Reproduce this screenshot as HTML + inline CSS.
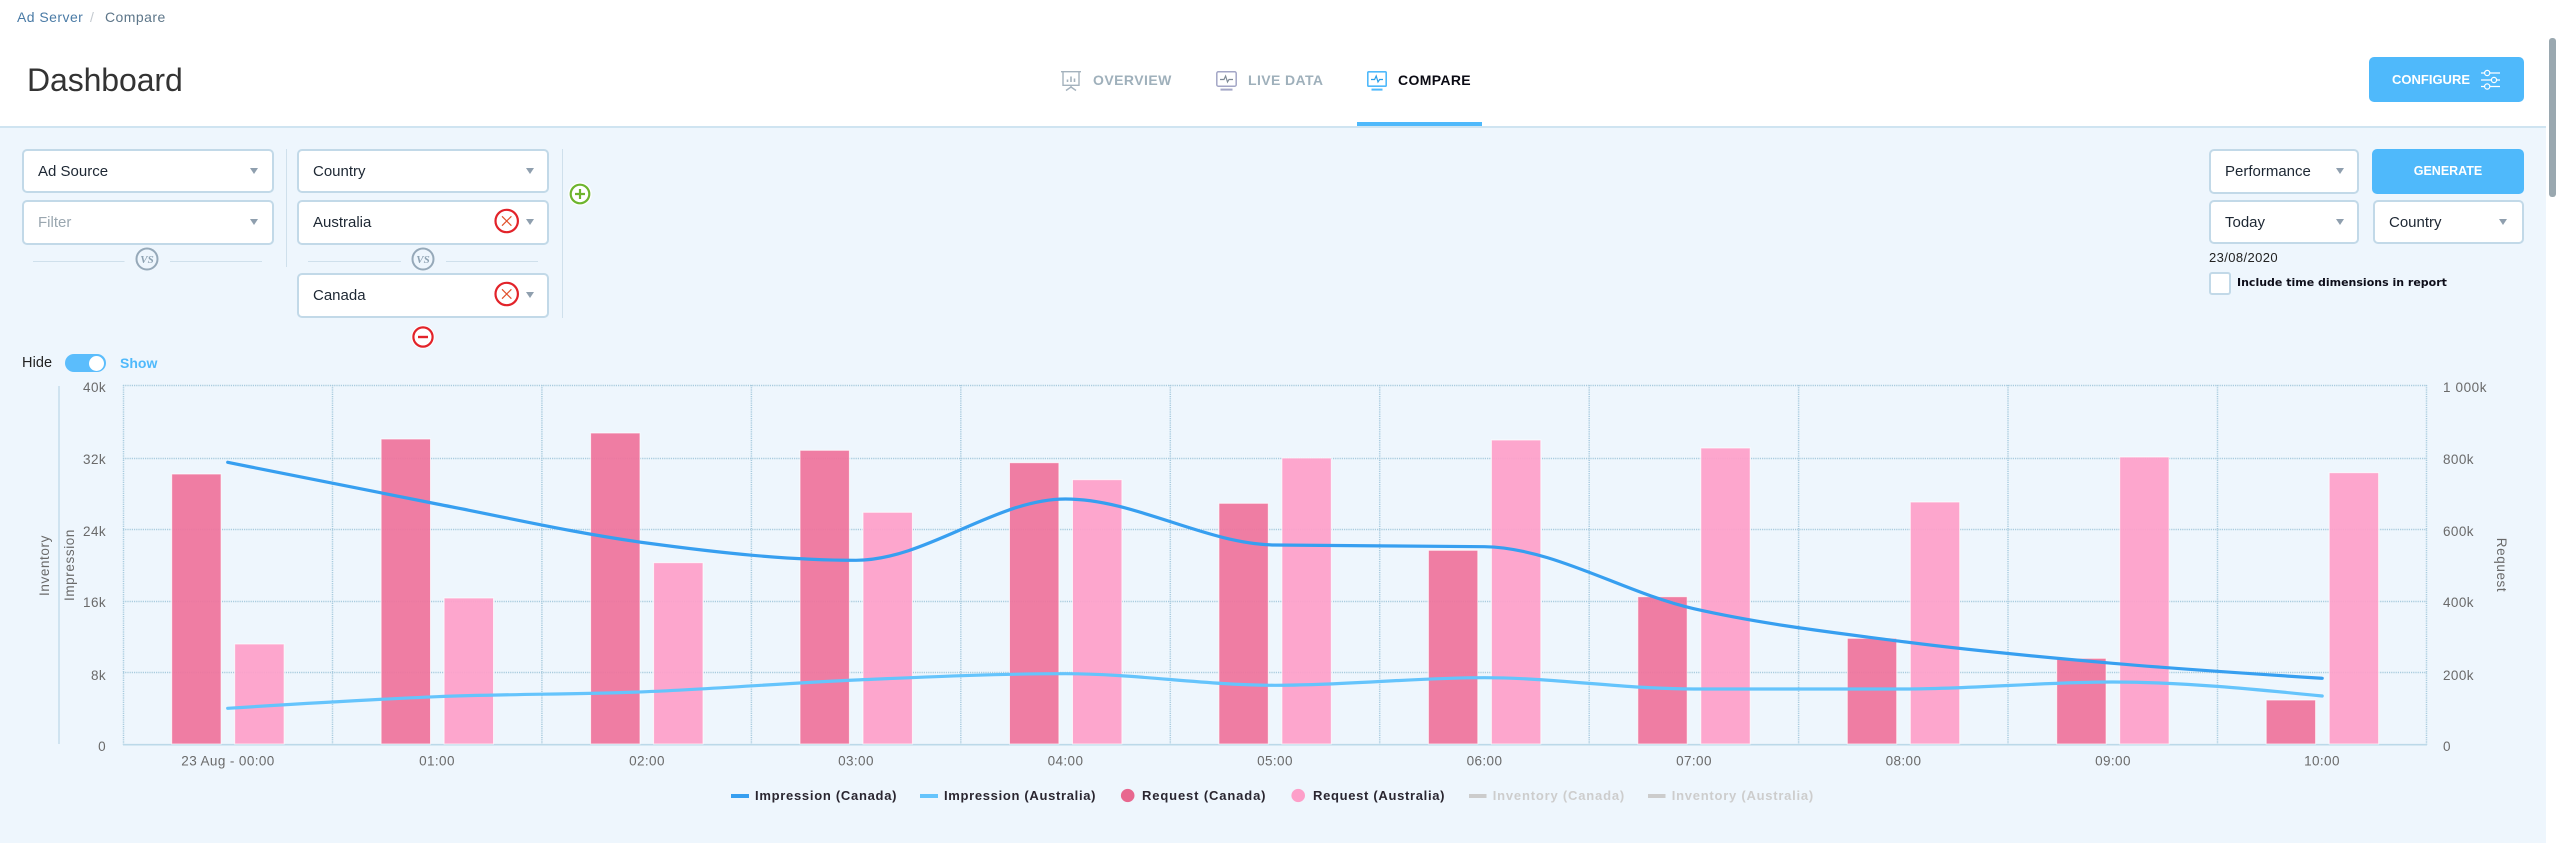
<!DOCTYPE html>
<html lang="en">
<head>
<meta charset="utf-8">
<title>Dashboard</title>
<style>
html,body{margin:0;padding:0;width:2556px;height:843px;overflow:hidden;background:#fff;font-family:"Liberation Sans",sans-serif}
.a{position:absolute;white-space:nowrap}
#panel{position:absolute;left:0;top:126px;width:2546px;height:717px;background:#eef6fd;border-top:2px solid #cfe4f1;box-sizing:border-box}
.sel{position:absolute;box-sizing:border-box;background:#fff;border:2px solid #c2d9e8;border-radius:5px;height:45px;font-size:15px;line-height:41px;color:#1d2733;padding-left:14px;white-space:nowrap}
.sel i{position:absolute;top:17px;width:0;height:0;border-left:4.5px solid transparent;border-right:4.5px solid transparent;border-top:6px solid #8f9fae}
.btn{position:absolute;background:#4fb9fb;color:#fff;font-weight:bold;border-radius:5px;box-sizing:border-box;white-space:nowrap}
svg{position:absolute;overflow:visible}
</style>
</head>
<body>
<div class="a" style="left:17px;top:9px;font-size:14px;line-height:17px;letter-spacing:.45px;color:#4a7ba6">Ad Server</div>
<div class="a" style="left:90px;top:9px;font-size:14px;line-height:17px;color:#c3c9cf">/</div>
<div class="a" style="left:105px;top:9px;font-size:14px;line-height:17px;letter-spacing:.45px;color:#5d7689">Compare</div>
<div class="a" style="left:27px;top:60px;font-size:32px;line-height:40px;color:#333;letter-spacing:-.1px">Dashboard</div>

<svg style="left:1061px;top:71px" width="20" height="20" viewBox="0 0 20 20" fill="none" stroke="#a4b2bd" stroke-width="1.4">
<path d="M0 .7H20M2 1V14.3H18V1M10 14.5V16M5 19.5L10 16L15 19.5"/>
<path d="M6.5 11V8.5M10 11V5.5M13.5 11V7.5" stroke-width="1.6"/>
</svg>
<div class="a" style="left:1093px;top:72px;font-size:14px;line-height:17px;font-weight:bold;letter-spacing:.45px;color:#9fb0bb">OVERVIEW</div>
<svg style="left:1216px;top:71px" width="21" height="20" viewBox="0 0 21 20" fill="none" stroke="#a3a6c6" stroke-width="1.5">
<rect x=".8" y=".8" width="19.4" height="14.4" rx="1.5"/>
<path d="M4 8.5H8L9.6 5L11.5 11L13 8.5H17" stroke="#7f8a96" stroke-width="1.2"/>
<path d="M4.5 18.6H16.5" stroke-width="2"/>
</svg>
<div class="a" style="left:1248px;top:72px;font-size:14px;line-height:17px;font-weight:bold;letter-spacing:.4px;color:#9fb0bb">LIVE DATA</div>
<svg style="left:1367px;top:71px" width="20" height="20" viewBox="0 0 20 20" fill="none" stroke="#4fb9fb" stroke-width="1.6">
<rect x=".8" y=".8" width="18.4" height="14.4" rx="1"/>
<path d="M4 8.5H7.6L9.2 5L11 11L12.6 8.5H16" stroke="#2b9fe8" stroke-width="1.2"/>
<path d="M4.5 18.6H15.5" stroke-width="2"/>
</svg>
<div class="a" style="left:1398px;top:72px;font-size:14px;line-height:17px;font-weight:bold;letter-spacing:.35px;color:#0b0b14">COMPARE</div>
<div class="a" style="left:1357px;top:122px;width:125px;height:4px;background:#4fb9fb"></div>

<div class="btn" style="left:2369px;top:57px;width:155px;height:45px;font-size:13px;line-height:45px;padding-left:23px">CONFIGURE</div>
<svg style="left:2481px;top:70px" width="19" height="20" viewBox="0 0 19 20" fill="none" stroke="#fff" stroke-width="1.2">
<path d="M0 3H3.5M9 3H19M0 10H10M16 10H19M0 16.5H3.5M9 16.5H19"/>
<circle cx="6.2" cy="3" r="2.6"/><circle cx="13" cy="10" r="2.6"/><circle cx="6.2" cy="16.5" r="2.6"/>
</svg>

<div id="panel"></div>
<div class="a" style="left:2549px;top:38px;width:7px;height:159px;background:#9aa8b0;border-radius:3px 3px 3px 3px"></div>

<!-- left filters -->
<div class="sel" style="left:22px;top:149px;width:252px;height:44px">Ad Source<i style="left:225.5px"></i></div>
<div class="sel" style="left:22px;top:200px;width:252px;color:#9aa7b0">Filter<i style="left:225.5px"></i></div>
<div class="a" style="left:286px;top:149px;width:1px;height:118px;background:#cfe0ec"></div>
<div class="sel" style="left:297px;top:149px;width:252px;height:44px">Country<i style="left:226.5px"></i></div>
<div class="sel" style="left:297px;top:200px;width:252px">Australia<i style="left:226.5px"></i></div>
<div class="sel" style="left:297px;top:273px;width:252px">Canada<i style="left:226.5px"></i></div>
<div class="a" style="left:562px;top:149px;width:1px;height:169px;background:#cfe0ec"></div>

<svg style="left:0;top:0" width="600" height="360" viewBox="0 0 600 360" fill="none">
<g stroke="#cfe0ec" stroke-width="1"><path d="M33 261.5H124.5M170 261.5H262M308 261.5H401M446 261.5H538"/></g>
<g stroke="#96a9b9" stroke-width="2" fill="#eef6fd">
<circle cx="147" cy="259" r="10.5"/><circle cx="423" cy="259" r="10.5"/>
</g>
<g font-family="Liberation Serif,serif" font-size="11" font-style="italic" font-weight="bold" fill="#8fa3b3" text-anchor="middle">
<text x="147" y="263">VS</text><text x="423" y="263">VS</text>
</g>
<g fill="#fff" stroke="#e2232a" stroke-width="2.2">
<circle cx="506.7" cy="221" r="11.2"/><circle cx="506.7" cy="294" r="11.2"/>
</g>
<g stroke="#e0502a" stroke-width="1.2">
<path d="M502 216.3L511.4 225.7M511.4 216.3L502 225.7"/>
<path d="M502 289.3L511.4 298.7M511.4 289.3L502 298.7"/>
</g>
<circle cx="580" cy="194" r="11.7" fill="#fff"/>
<circle cx="580" cy="194" r="9.3" fill="#fff" stroke="#6db52e" stroke-width="2.2"/>
<path d="M575 194H585M580 189V199" stroke="#6db52e" stroke-width="2.2"/>
<circle cx="423" cy="337" r="11.7" fill="#fff"/>
<circle cx="423" cy="337" r="9.6" fill="#fff" stroke="#e2232a" stroke-width="2.2"/>
<path d="M418 337H428" stroke="#e2232a" stroke-width="2.4"/>
</svg>

<!-- right filters -->
<div class="sel" style="left:2209px;top:149px;width:150px">Performance<i style="left:124.5px"></i></div>
<div class="btn" style="left:2372px;top:149px;width:152px;height:45px;font-size:12.5px;line-height:45px;text-align:center">GENERATE</div>
<div class="sel" style="left:2209px;top:200px;width:150px;height:44px">Today<i style="left:124.5px"></i></div>
<div class="sel" style="left:2373px;top:200px;width:151px;height:44px">Country<i style="left:123.5px"></i></div>
<div class="a" style="left:2209px;top:250px;font-size:13px;line-height:16px;letter-spacing:.4px;color:#222">23/08/2020</div>
<div class="a" style="left:2209px;top:272px;width:22px;height:23px;box-sizing:border-box;background:#fff;border:2px solid #c2d9e8;border-radius:3px"></div>
<div class="a" style="left:2237px;top:275px;font-family:'DejaVu Sans',sans-serif;font-weight:bold;font-size:11px;line-height:16px;color:#0e0e1a">Include time dimensions in report</div>

<!-- toggle -->
<div class="a" style="left:22px;top:355px;font-size:14.5px;line-height:17px;letter-spacing:.1px;color:#222">Hide</div>
<div class="a" style="left:65px;top:354px;width:41px;height:18px;background:#5bbdfc;border-radius:9px"></div>
<div class="a" style="left:89px;top:355.5px;width:15px;height:15px;background:#fff;border-radius:50%"></div>
<div class="a" style="left:120px;top:355px;font-size:14px;line-height:17px;font-weight:bold;color:#4fb9fb">Show</div>

<!-- chart -->
<svg style="left:0;top:0" width="2556" height="843" viewBox="0 0 2556 843" fill="none">
<path d="M59 386V744" stroke="#cfe3f0" stroke-width="2"/>
<g stroke="#a9cbde" stroke-width="1.5" stroke-dasharray="1.2 1">
<path d="M123 385.5H2427M123 458.5H2427M123 529.5H2427M123 601.5H2427M123 672.5H2427"/>
<path d="M123.5 385V745M332.5 385V745M541.9 385V745M751.4 385V745M960.8 385V745M1170.3 385V745M1379.7 385V745M1589.2 385V745M1798.6 385V745M2008 385V745M2217.5 385V745M2426.5 385V745"/>
</g>
<path d="M123 744.7H2427" stroke="#bcd9e9" stroke-width="1.6"/>

<g fill="#ef739c" fill-opacity=".93" stroke="#fff" stroke-opacity=".7" stroke-width="1">
<rect x="171.7" y="474" width="49.4" height="270"/>
<rect x="381.1" y="439" width="49.4" height="305"/>
<rect x="590.6" y="433" width="49.4" height="311"/>
<rect x="800" y="450.3" width="49.4" height="293.7"/>
<rect x="1009.5" y="462.7" width="49.4" height="281.3"/>
<rect x="1218.9" y="503.3" width="49.4" height="240.7"/>
<rect x="1428.4" y="550.3" width="49.4" height="193.7"/>
<rect x="1637.8" y="596.7" width="49.4" height="147.3"/>
<rect x="1847.3" y="638.3" width="49.4" height="105.7"/>
<rect x="2056.7" y="658.3" width="49.4" height="85.7"/>
<rect x="2266.2" y="700" width="49.4" height="44"/>
</g>
<g fill="#fe9fc9" fill-opacity=".93" stroke="#fff" stroke-opacity=".7" stroke-width="1">
<rect x="234.7" y="644" width="49.4" height="100"/>
<rect x="444.1" y="598" width="49.4" height="146"/>
<rect x="653.6" y="562.7" width="49.4" height="181.3"/>
<rect x="863" y="512.3" width="49.4" height="231.7"/>
<rect x="1072.5" y="479.7" width="49.4" height="264.3"/>
<rect x="1281.9" y="458" width="49.4" height="286"/>
<rect x="1491.4" y="440" width="49.4" height="304"/>
<rect x="1700.8" y="448" width="49.4" height="296"/>
<rect x="1910.3" y="502" width="49.4" height="242"/>
<rect x="2119.7" y="457" width="49.4" height="287"/>
<rect x="2329.2" y="472.7" width="49.4" height="271.3"/>
</g>

<path stroke="#379ff0" stroke-width="3.2" stroke-linecap="round" d="M227.7 462.3C297.5 476.4 367.3 490.6 437.1 504C506.9 517.45 576.8 533.6 646.6 543C716.4 552.4 786.2 560.3 856 560.3C925.8 560.3 995.7 499 1065.5 499C1135.3 499 1205.1 543.9 1274.9 545C1344.7 546.1 1414.6 545.6 1484.4 546.7C1554.2 547.8 1624 592.9 1693.8 608.7C1763.6 624.5 1833.5 632.6 1903.3 641.7C1973.1 650.8 2042.9 657.2 2112.7 663.3C2182.5 669.4 2252.4 673.85 2322.2 678.3"/>
<path stroke="#65c4fc" stroke-width="3.2" stroke-linecap="round" d="M227.7 708.3C297.5 703.9 367.3 699.5 437.1 696.7C506.9 693.9 576.8 694.5 646.6 691.7C716.4 688.9 786.2 683 856 680C925.8 677 995.7 673.7 1065.5 673.7C1135.3 673.7 1205.1 685.3 1274.9 685.3C1344.7 685.3 1414.6 677.7 1484.4 677.7C1554.2 677.7 1624 689 1693.8 689C1763.6 689 1833.5 689 1903.3 689C1973.1 689 2042.9 682 2112.7 682C2182.5 682 2252.4 689 2322.2 696"/>

<g font-family="Liberation Sans,sans-serif" font-size="13.5" fill="#6a6a6a" letter-spacing=".4" text-anchor="end">
<text x="106" y="392">40k</text><text x="106" y="464">32k</text><text x="106" y="536">24k</text><text x="106" y="607">16k</text><text x="106" y="680">8k</text><text x="106" y="751">0</text>
</g>
<g font-family="Liberation Sans,sans-serif" font-size="13.5" fill="#6a6a6a" letter-spacing=".4">
<text x="2443" y="392" letter-spacing=".6">1 000k</text><text x="2443" y="464">800k</text><text x="2443" y="536">600k</text><text x="2443" y="607">400k</text><text x="2443" y="680">200k</text><text x="2443" y="751">0</text>
</g>
<g font-family="Liberation Sans,sans-serif" font-size="13.5" fill="#6a6a6a" letter-spacing=".4" text-anchor="middle">
<text x="228" y="765.5">23 Aug - 00:00</text><text x="437" y="765.5">01:00</text><text x="647" y="765.5">02:00</text><text x="856" y="765.5">03:00</text><text x="1065.5" y="765.5">04:00</text><text x="1275" y="765.5">05:00</text><text x="1484.5" y="765.5">06:00</text><text x="1694" y="765.5">07:00</text><text x="1903.5" y="765.5">08:00</text><text x="2113" y="765.5">09:00</text><text x="2322" y="765.5">10:00</text>
</g>
<g font-family="Liberation Sans,sans-serif" font-size="13.5" fill="#6a6a6a" letter-spacing=".6" text-anchor="middle">
<text transform="translate(49 565.5) rotate(-90)">Inventory</text>
<text transform="translate(74 565) rotate(-90)">Impression</text>
<text transform="translate(2497 565) rotate(90)">Request</text>
</g>

<rect x="731" y="794" width="18" height="4" fill="#379ff0"/>
<rect x="920" y="794" width="18" height="4" fill="#65c4fc"/>
<ellipse cx="1127.7" cy="795.5" rx="6.8" ry="6.6" fill="#e8688f"/>
<ellipse cx="1298.2" cy="795.5" rx="6.8" ry="6.6" fill="#fd9fc9"/>
<rect x="1469" y="794" width="17.5" height="4" fill="#cccccc"/>
<rect x="1648" y="794" width="17.5" height="4" fill="#cccccc"/>
<g font-family="Liberation Sans,sans-serif" font-size="13" font-weight="bold" fill="#2a2630">
<text x="755" y="800" textLength="141.5">Impression (Canada)</text>
<text x="944" y="800" textLength="151.5">Impression (Australia)</text>
<text x="1142" y="800" textLength="123.5">Request (Canada)</text>
<text x="1313" y="800" textLength="131.5">Request (Australia)</text>
<text x="1492.7" y="800" textLength="131.5" fill="#cdcdcd">Inventory (Canada)</text>
<text x="1671.7" y="800" textLength="141.5" fill="#cdcdcd">Inventory (Australia)</text>
</g>
</svg>
</body>
</html>
